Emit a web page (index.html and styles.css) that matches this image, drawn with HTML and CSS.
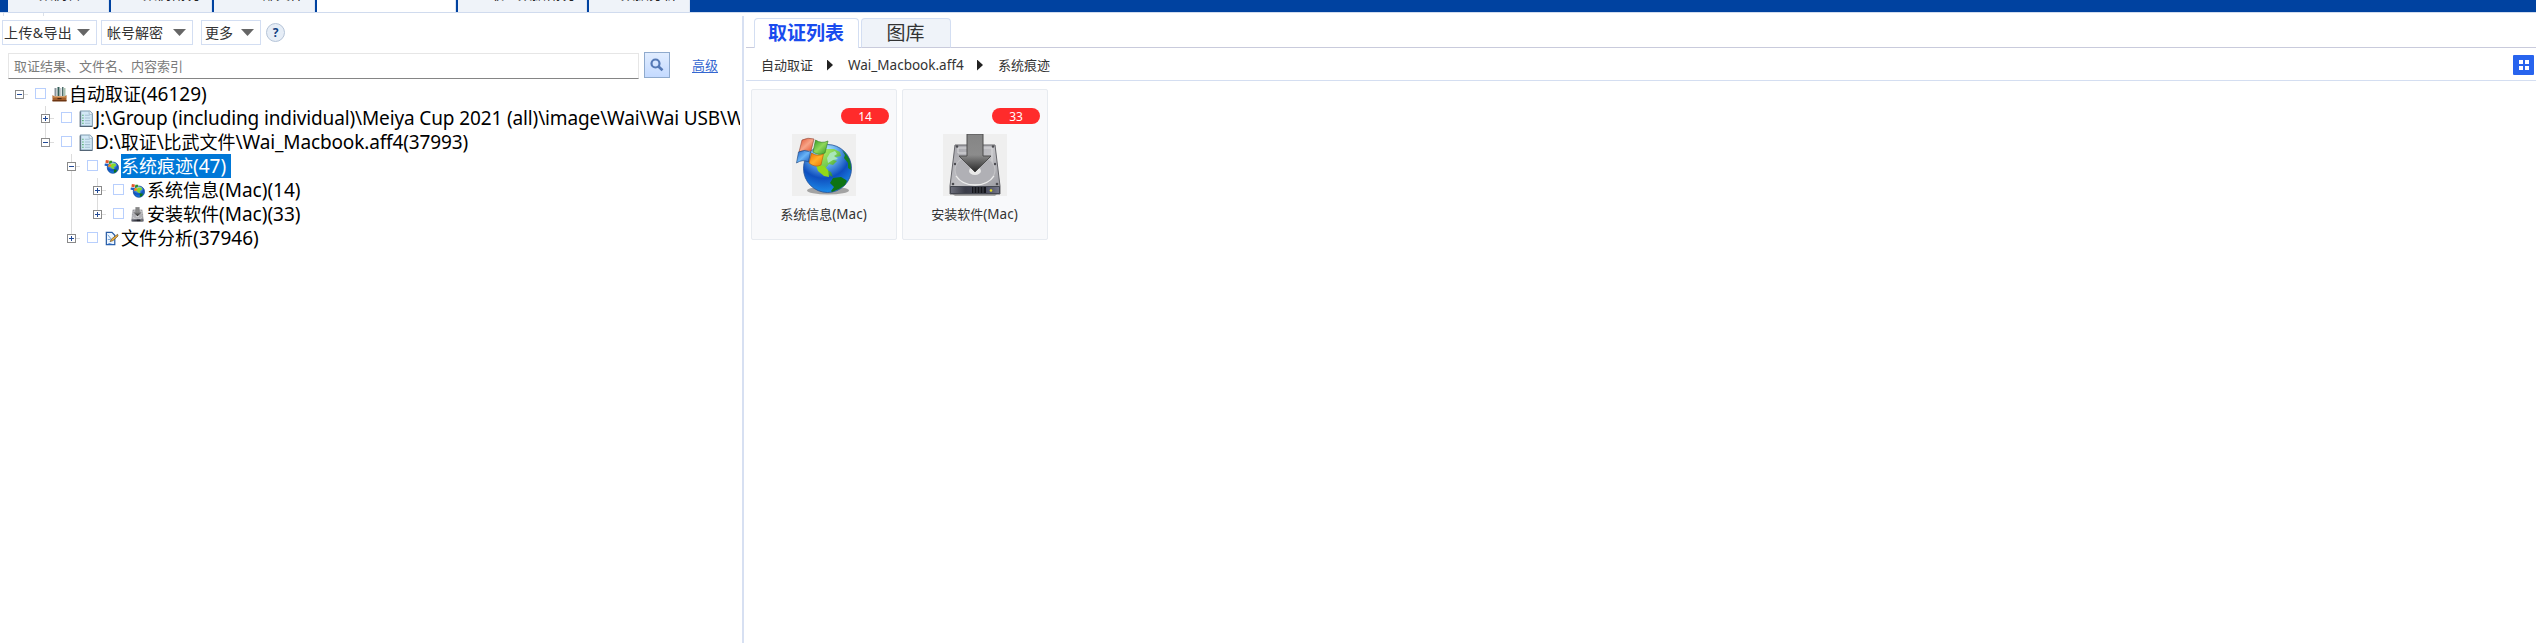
FILE: index.html
```html
<!DOCTYPE html>
<html lang="zh-CN">
<head>
<meta charset="utf-8">
<title>取证列表</title>
<link rel="stylesheet" href="styles.css">
</head>
<body>
<svg class="defs" width="0" height="0" aria-hidden="true">
  <defs>
    <linearGradient id="metal" x1="0" y1="0" x2="1" y2="1"><stop offset="0" stop-color="#a5a5ab"/><stop offset=".5" stop-color="#c0c0c4"/><stop offset="1" stop-color="#96969c"/></linearGradient>
    <linearGradient id="arrow" x1="0" y1="0" x2="0" y2="1"><stop offset="0" stop-color="#858585"/><stop offset=".55" stop-color="#8c8c8c"/><stop offset="1" stop-color="#262626"/></linearGradient>
    <linearGradient id="front" x1="0" y1="0" x2="1" y2="0"><stop offset="0" stop-color="#6e707c"/><stop offset=".3" stop-color="#3a3c48"/><stop offset=".7" stop-color="#45485a"/><stop offset="1" stop-color="#77798a"/></linearGradient>
    <radialGradient id="sea" cx=".42" cy=".15" r=".85"><stop offset="0" stop-color="#c9f4ff"/><stop offset=".3" stop-color="#6fb8f0"/><stop offset=".65" stop-color="#0f4fbf"/><stop offset="1" stop-color="#1c8ae8"/></radialGradient>
    <linearGradient id="land" x1="0" y1="0" x2="1" y2="1"><stop offset="0" stop-color="#b8ef3c"/><stop offset=".5" stop-color="#79d328"/><stop offset="1" stop-color="#0c6b10"/></linearGradient>
    <linearGradient id="red" x1="0" y1="0" x2="1" y2="1"><stop offset="0" stop-color="#e2502c"/><stop offset=".5" stop-color="#f7a488"/><stop offset="1" stop-color="#e24a22"/></linearGradient>
    <linearGradient id="green" x1="0" y1="0" x2="1" y2="1"><stop offset="0" stop-color="#2f9a22"/><stop offset=".5" stop-color="#8fd85c"/><stop offset="1" stop-color="#2f9420"/></linearGradient>
    <linearGradient id="blue" x1="0" y1="0" x2="1" y2="1"><stop offset="0" stop-color="#1d5fc4"/><stop offset=".5" stop-color="#69b4f6"/><stop offset="1" stop-color="#1450b8"/></linearGradient>
    <linearGradient id="orange" x1="0" y1="0" x2="1" y2="1"><stop offset="0" stop-color="#f06c00"/><stop offset=".5" stop-color="#ffb02a"/><stop offset="1" stop-color="#f07000"/></linearGradient>
    <symbol id="i-box" viewBox="0 0 14 15">
      <path d="M2 1h2v8H2z" fill="#8b949b"/><path d="M5 0h2v9H5z" fill="#345e58"/><path d="M7.500 1h1.500v8H7.500z" fill="#c2c9cc"/><path d="M9.500 0h1.500v9H9.500z" fill="#4c6c69"/><path d="M11.500 1H13v8h-1.500z" fill="#abc4b1"/>
      <path d="M0 8l2 1.500h10l2-1.500v6H0z" fill="#a35e2c"/><path d="M0 9.500h14v1H0z" fill="#d99857"/><path d="M0 13h14v1.500H0z" fill="#6d3511"/><path d="M5 11h4v1.200H5z" fill="#4f270c"/>
    </symbol>
    <symbol id="i-doc" viewBox="0 0 14 16">
      <path d="M2 1h8.500L13 3.500V15H2z" fill="#d2e8f6" stroke="#7f9bb0"/><path d="M1.500 1.500V15.500H13" fill="none" stroke="#536576"/><path d="M10 1v3h3" fill="#fff" stroke="#8eabc0" stroke-width=".7"/>
      <path d="M3.500 5h1.200M3.500 7.500h1.200M3.500 10h1.200M3.500 12.500h1.200" stroke="#3ca553"/><path d="M6 5h4.500M6 7.500h5M6 10h5M6 12.500h5" stroke="#a5c0d4"/>
    </symbol>
    <symbol id="i-edit" viewBox="0 0 14 16">
      <path d="M1.500 1.500h6l3 3v10h-9z" fill="#edf6ff" stroke="#285ca5" stroke-width="1.300"/><path d="M1.500 14.500l3-1.500 6 1.500z" fill="#2a6dc9"/><path d="M3 4l4 5M3 9h3" stroke="#6b9bd2"/><path d="M13.500 3.500L7 8.500l-1.500 2.800 3-1 5.500-5z" fill="#f1b23c" stroke="#5b4424" stroke-width=".7"/>
    </symbol>
    <symbol id="i-globe" viewBox="0 0 64 62">
      <ellipse cx="36" cy="56.500" rx="21" ry="4" fill="#8a8a8a" opacity=".75"/>
      <circle cx="35.500" cy="34.500" r="24" fill="url(#sea)" stroke="#234f94" stroke-width=".8"/>
      <path d="M33 15l9 0 6 3 1 4-5 1-2 3 3 1-4 4-4-1-4 5 6 3 2 5-4-2-8-4-5-8 1-8z" fill="url(#land)" opacity=".8"/>
      <path d="M38 19l5-2 2 3-3 2 4 3-5 1-5 3-1-5z" fill="#a9e5b8"/>
      <path d="M41 44l8-1 5 3 1 1-2 4-6 4-7 3-1-1 3-4-4-4z" fill="#0e7414"/>
      <path d="M50 16q10 8 9 20l-3-2 0-5-4-5 1-3z" fill="#158022"/>
      <path d="M24 31l8 1 4 4 1 7-5-1-6-5z" fill="#92d919"/>
      <path d="M10 6q6-3 12-1l-3 12q-6-2-12 1z" fill="url(#red)" stroke="#8c3f30" stroke-width=".6"/>
      <path d="M23.500 6q6 4 12.500 1l-3 12q-6 3-12-1z" fill="url(#green)" stroke="#357b27" stroke-width=".6"/>
      <path d="M6.500 18q6-3 12 0l-2 10q-6-3-12 1z" fill="url(#blue)" stroke="#184078" stroke-width=".6"/>
      <path d="M19.500 19q6 4 12 1l-2.500 11q-6 3-12-2z" fill="url(#orange)" stroke="#b45b08" stroke-width=".6"/>
    </symbol>
    <symbol id="i-globe-small" viewBox="0 0 64 62">
      <circle cx="38" cy="36" r="24" fill="url(#sea)" stroke="#0c3c8c" stroke-width="3"/>
      <path d="M34 18h14l4 8-12 8 6 8-8 0-12-10z" fill="#86d92a"/><path d="M42 44h14l-4 9-10 6z" fill="#0e7414"/>
      <path d="M8 3l13 2-2 12-13-2z" fill="#e2562c"/><path d="M23 6h12l-3 12H21z" fill="#2f8f22"/><path d="M4 18l14 1-2 12-14-4z" fill="#1d5fc4"/><path d="M20 21h12l-4 11H17z" fill="#f98a10"/>
    </symbol>
    <symbol id="i-disk" viewBox="0 0 64 62">
      <path d="M8 59h47l-3 3H12z" fill="#aaa"/>
      <path d="M12 11h40l5 41v8H7v-8z" fill="url(#metal)" stroke="#66666b" stroke-width="1"/>
      <path d="M15 14h14v5H15zM35 14h14v17" fill="none" stroke="#d8d8da"/>
      <ellipse cx="32" cy="36" rx="20" ry="15" fill="#b0b0b5" stroke="#c3c3c6" stroke-width="1.200"/>
      <path d="M13 42q6 9 19 9t19-9" fill="none" stroke="#eee" stroke-width="1.300"/>
      <ellipse cx="32" cy="37" rx="6" ry="4" fill="#e8e8e8"/>
      <path d="M7.500 52.500h49v7h-49z" fill="url(#front)" stroke="#444750"/><path d="M29 53h14v6H29z" fill="#15161c"/><path d="M31 53v6M34 53v6M37 53v6M40 53v6" stroke="#4b4d57"/><circle cx="48" cy="56.500" r="1.300" fill="#e6df20"/>
      <g fill="#4b4b50"><circle cx="14" cy="12.500" r="1.200"/><circle cx="50" cy="12.500" r="1.200"/><circle cx="12" cy="30" r="1.200"/><circle cx="52" cy="30" r="1.200"/><circle cx="10" cy="50" r="1.300"/><circle cx="54" cy="50" r="1.300"/></g>
      <path d="M24 0h16v22h8L32 38 16 22h8z" fill="url(#arrow)" stroke="#4c4c4c" stroke-width="1"/>
    </symbol>
  </defs>
</svg>
<header class="topbar">
  <nav class="modules">
    <span class="module m1">案例管理</span>
    <span class="module m2">案例概况</span>
    <span class="module m3">全部文件</span>
    <span class="module m-active"></span>
    <span class="module m4">取证数据概况</span>
    <span class="module m5">数据分析</span>
  </nav>
</header>
<main class="workspace">
  <aside class="side">
    <div class="ticks"></div>
    <div class="toolbar">
      <button class="tool t1"><span>上传&amp;导出</span><i class="caret"></i></button>
      <button class="tool t2">帐号解密<i class="caret"></i></button>
      <button class="tool t3">更多<i class="caret"></i></button>
      <span class="help">?</span>
    </div>
    <div class="search">
      <div class="field">取证结果、文件名、内容索引</div>
      <button class="go"><svg width="14" height="14" viewBox="0 0 14 14"><circle cx="5.500" cy="5.500" r="4" fill="none" stroke="#5579b5" stroke-width="2.200"/><path d="M8.500 8.500l4 3.800" stroke="#5579b5" stroke-width="2.600"/></svg></button>
      <a class="advanced">高级</a>
    </div>
    <div class="tree">
      <div class="row"><i class="toggle"></i><i class="check"></i><svg class="ico"><use href="#i-box"/></svg><span class="name">自动取证<b>(46129)</b></span></div>
      <div class="branch b1">
        <div class="row"><i class="toggle plus"></i><i class="check"></i><svg class="ico doc"><use href="#i-doc"/></svg><span class="name tight"><b>J:\Group (including individual)\Meiya Cup 2021 (all)\image\Wai\Wai USB\W</b></span></div>
        <div class="row"><i class="toggle"></i><i class="check"></i><svg class="ico doc"><use href="#i-doc"/></svg><span class="name tight"><b>D:\</b>取证<b>\</b>比武文件<b>\Wai_Macbook.aff4(37993)</b></span></div>
        <div class="branch b2">
          <div class="row"><i class="toggle"></i><i class="check"></i><svg class="ico"><use href="#i-globe-small"/></svg><span class="name selected">系统痕迹<b>(47)</b></span></div>
          <div class="branch b3">
            <div class="row"><i class="toggle plus"></i><i class="check"></i><svg class="ico"><use href="#i-globe-small"/></svg><span class="name">系统信息<b>(Mac)(14)</b></span></div>
            <div class="row"><i class="toggle plus"></i><i class="check"></i><svg class="ico"><use href="#i-disk"/></svg><span class="name">安装软件<b>(Mac)(33)</b></span></div>
          </div>
          <div class="row"><i class="toggle plus"></i><i class="check"></i><svg class="ico"><use href="#i-edit"/></svg><span class="name">文件分析<b>(37946)</b></span></div>
        </div>
      </div>
    </div>
  </aside>
  <section class="content">
    <div class="tabs"><span class="tab active">取证列表</span><span class="tab idle">图库</span></div>
    <div class="crumbs">
      <span>自动取证</span><i class="sep"></i><span class="file">Wai_Macbook.aff4</span><i class="sep"></i><span>系统痕迹</span>
      <button class="view"><svg width="10" height="10" viewBox="0 0 10 10" fill="#fff"><path d="M0 0h4v4H0zM6 0h4v4H6zM0 6h4v4H0zM6 6h4v4H6z"/></svg></button>
    </div>
    <div class="cards">
      <article class="card"><span class="badge">14</span><div class="pic"><svg><use href="#i-globe"/></svg></div><span class="label">系统信息<b>(Mac)</b></span></article>
      <article class="card"><span class="badge">33</span><div class="pic"><svg><use href="#i-disk"/></svg></div><span class="label">安装软件<b>(Mac)</b></span></article>
    </div>
  </section>
</main>
</body>
</html>
```
FILE: styles.css
```css
* { box-sizing: border-box; }
body { margin: 0; height: 643px; overflow: hidden; background: #fff; color: #333; font: 13px/1 "Noto Sans", "Noto Sans CJK SC", sans-serif; }
button { font: inherit; color: inherit; padding: 0; margin: 0; line-height: 1; }
b { font-weight: 400; }
.defs { position: absolute; }

.topbar { height: 13px; background: #0042a0; border-bottom: 1px solid #d0dbee; overflow: hidden; }
/* The strip is scrolled up, so only the foot of each module label shows. */
.modules { display: flex; height: 30px; margin-top: -18px; padding-left: 8px; }
.module { flex: none; height: 30px; margin-right: 2px; border-right: 1px solid #dce5f3; background: #eff3f9; color: #222; font-size: 14px; line-height: 24px; white-space: nowrap; }
.m1 { width: 101px; padding-left: 31px; }
.m2 { width: 101px; padding-left: 32px; }
.m3 { width: 101px; padding-left: 34px; }
.m-active { width: 139px; background: #fff; }
.m4 { width: 129px; padding-left: 32px; }
.m5 { width: 101px; padding-left: 32px; margin-right: 0; }

.workspace { display: flex; height: 630px; }
.side { width: 744px; flex: none; background: linear-gradient(#d7e0f2, #d7e0f2) 742px 3px / 2px 627px no-repeat; }
.ticks { height: 3px; width: 41px; margin-left: 3px; border: solid #dce1e8; border-width: 0 1px; }
.toolbar { display: flex; align-items: center; height: 33px; padding: 0 0 0 2px; }
.tool { height: 25px; display: flex; align-items: center; justify-content: space-between; background: #fff; border: 1px solid #d3def2; font-size: 14px; white-space: nowrap; }
.t1 { width: 95px; padding: 0 6px 0 1px; margin-right: 4px; letter-spacing: .4px; }
.t2 { width: 92px; padding: 0 6px 0 5px; margin-right: 8px; }
.t3 { width: 60px; padding: 0 6px 0 3px; margin-right: 5px; }
.caret { width: 13px; height: 7px; background: #666; clip-path: polygon(0 0, 100% 0, 50% 100%); }
.help { width: 19px; height: 19px; border: 1px solid #b5c4d8; border-radius: 50%; background: #e6edf6; color: #104080; font: bold 12px/17px "Noto Sans", sans-serif; text-align: center; }
.search { display: flex; align-items: flex-start; height: 33px; padding: 3px 0 0 8px; }
.field { width: 631px; height: 26px; margin: 1px 5px 0 0; border: 1px solid #e6e6e6; border-bottom-color: #858585; padding-left: 5px; line-height: 24px; color: #7b7b7b; }
.go { width: 26px; height: 26px; border: 1px solid #8faacd; background: linear-gradient(#e1edff, #c4daff); display: flex; align-items: center; justify-content: center; margin-right: 22px; }
.advanced { color: #3467d1; line-height: 27px; text-decoration: underline; text-underline-offset: 2px; }

.tree { width: 740px; overflow: hidden; }
.branch { padding-left: 26px; background: linear-gradient(#dcdcdc, #dcdcdc) 45px 0 no-repeat; }
.b1 { background-position-x: 45px; background-size: 1px 36px; }
.b2 { background-size: 1px 84px; }
.b3 { background-size: 1px 36px; }
.row { display: flex; align-items: center; height: 24px; padding-left: 15px; white-space: nowrap; }
.toggle { flex: none; width: 9px; height: 9px; border: 1px solid #8a8a8a; background: linear-gradient(#234a96, #234a96) center / 5px 1px no-repeat, #fff; }
.toggle.plus { background: linear-gradient(#234a96, #234a96) center / 5px 1px no-repeat, linear-gradient(#234a96, #234a96) center / 1px 5px no-repeat, #fff; }
.toggle::after { content: ""; display: block; width: 4px; height: 1px; margin: 3px 0 0 8px; background: #dcdcdc; }
.check { flex: none; width: 11px; height: 11px; border: 1px solid #b8cffd; margin-left: 11px; margin-top: -1px; background: #fff; }
.ico { flex: none; width: 15px; height: 15px; margin: 0 2px 0 6px; }
.doc { width: 16px; height: 17px; margin-right: 1px; }
.name { color: #000; font-size: 18px; line-height: 24px; height: 24px; display: flex; align-items: baseline; }
.name b { font-size: 19px; line-height: 24px; white-space: pre; }
.tight b { letter-spacing: -.13px; }
.selected { background: #0078d7; color: #fff; padding-right: 5px; }

.content { flex: 1; padding-left: 2px; min-width: 0; }
.tabs { height: 35px; padding: 5px 0 0 8px; display: flex; background: linear-gradient(#c9cbdc, #c9cbdc) 0 100% / 100% 1px no-repeat; }
.tab { height: 30px; border: 1px solid #d3def2; border-radius: 4px 4px 0 0; font-size: 19px; line-height: 29px; text-align: center; }
.active { width: 105px; border-bottom: 0; background: #fff; color: #194bee; font-weight: 700; margin-right: 2px; padding-right: 1px; }
.idle { width: 90px; background: #eff3f9; border-bottom-color: #c9cbdc; padding-right: 1px; }
.crumbs { height: 33px; border-bottom: 1px solid #d4def1; display: flex; align-items: center; padding: 2px 2px 0 15px; }
.sep { width: 6px; height: 11px; margin: 0 15px 0 14px; background: #222; clip-path: polygon(0 0, 100% 50%, 0 100%); }
.file { width: 115px; padding-top: 1px; font-size: 13.500px; white-space: nowrap; }
.view { width: 21px; height: 20px; margin-left: auto; border: 0; border-radius: 1px; background: #2864ee; display: flex; align-items: center; justify-content: center; }
.cards { display: flex; gap: 5px; padding: 8px 0 0 5px; }
.card { width: 146px; height: 151px; border: 1px solid #e7ebf0; background: #f8f9fb; border-radius: 2px; padding: 18px 7px 0; display: flex; flex-direction: column; align-items: center; }
.badge { align-self: flex-end; width: 48px; height: 16px; border-radius: 8px; background: #ff2b2b; color: #fff; font-size: 12px; line-height: 17px; text-align: center; }
.pic { width: 64px; height: 62px; margin-top: 10px; background: #efefef; }
.pic svg { width: 64px; height: 62px; display: block; }
.label { margin-top: 9px; padding-right: 1px; line-height: 18px; white-space: nowrap; }
.label b { font-size: 13.500px; }
```
